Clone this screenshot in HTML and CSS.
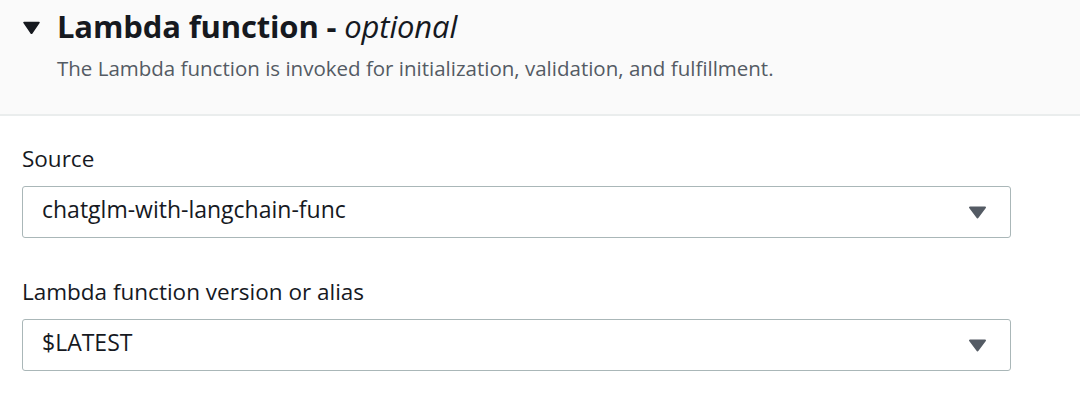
FILE: index.html
```html
<!DOCTYPE html>
<html>
<head>
<meta charset="utf-8">
<link rel="stylesheet" href="styles.css">
</head>
<body>
<div class="panel">
  <div class="header">
    <div class="title-row">
      <svg class="toggle" width="17" height="13" viewBox="0 0 17 13"><path d="M1 1.5 H16 L8.5 12.5 Z" fill="#16191f" stroke="#16191f" stroke-width="1.5" stroke-linejoin="round"/></svg>
      <h2 class="title">Lambda function - <em class="opt">optional</em></h2>
    </div>
    <p class="desc">The Lambda function is invoked for initialization, validation, and fulfillment.</p>
  </div>
  <div class="body">
    <div class="field">
      <label class="label">Source</label>
      <div class="select">
        <span class="value">chatglm-with-langchain-func</span>
        <svg class="caret" width="19" height="13" viewBox="0 0 19 13"><path d="M2 1.5 H17 L9.5 11.5 Z" fill="#545b64" stroke="#545b64" stroke-width="2" stroke-linejoin="round"/></svg>
      </div>
    </div>
    <div class="field">
      <label class="label">Lambda function version or alias</label>
      <div class="select">
        <span class="value">$LATEST</span>
        <svg class="caret" width="19" height="13" viewBox="0 0 19 13"><path d="M2 1.5 H17 L9.5 11.5 Z" fill="#545b64" stroke="#545b64" stroke-width="2" stroke-linejoin="round"/></svg>
      </div>
    </div>
  </div>
</div>
</body>
</html>
```
FILE: styles.css
```css
* { box-sizing: border-box; }
html, body { margin: 0; padding: 0; background: #ffffff; }
body {
  font-family: "Open Sans", "Noto Sans", sans-serif;
  color: #16191f;
  width: 1080px;
  height: 407px;
  overflow: hidden;
}
.header {
  background: #fafafa;
  border-bottom: 2px solid #eaeded;
  height: 116px;
  padding: 7px 22px 0 23px;
}
.title-row {
  display: flex;
  align-items: center;
  gap: 17px;
}
.toggle { flex: none; margin-top: 3px; }
.title {
  margin: 0;
  font-size: 31px;
  line-height: 38px;
  font-weight: 700;
  color: #16191f;
  letter-spacing: -0.15px;
}
.opt {
  font-weight: 400;
  font-style: italic;
}
.desc {
  margin: 10px 0 0 34px;
  font-size: 20.5px;
  line-height: 26px;
  color: #545b64;
}
.body {
  padding: 29px 69px 0 22px;
  display: flex;
  flex-direction: column;
  gap: 40px;
}
.field {
  display: flex;
  flex-direction: column;
  gap: 13px;
}
.label {
  font-size: 22.5px;
  line-height: 28px;
  color: #16191f;
}
.select {
  height: 52px;
  border: 1.5px solid #aab7b8;
  border-radius: 3px;
  display: flex;
  align-items: center;
  justify-content: space-between;
  padding: 0 23px 6px 19px;
  background: #fff;
}
.value {
  font-size: 23px;
  line-height: 30px;
  color: #16191f;
}
.caret { flex: none; margin-top: 6px; }
```
